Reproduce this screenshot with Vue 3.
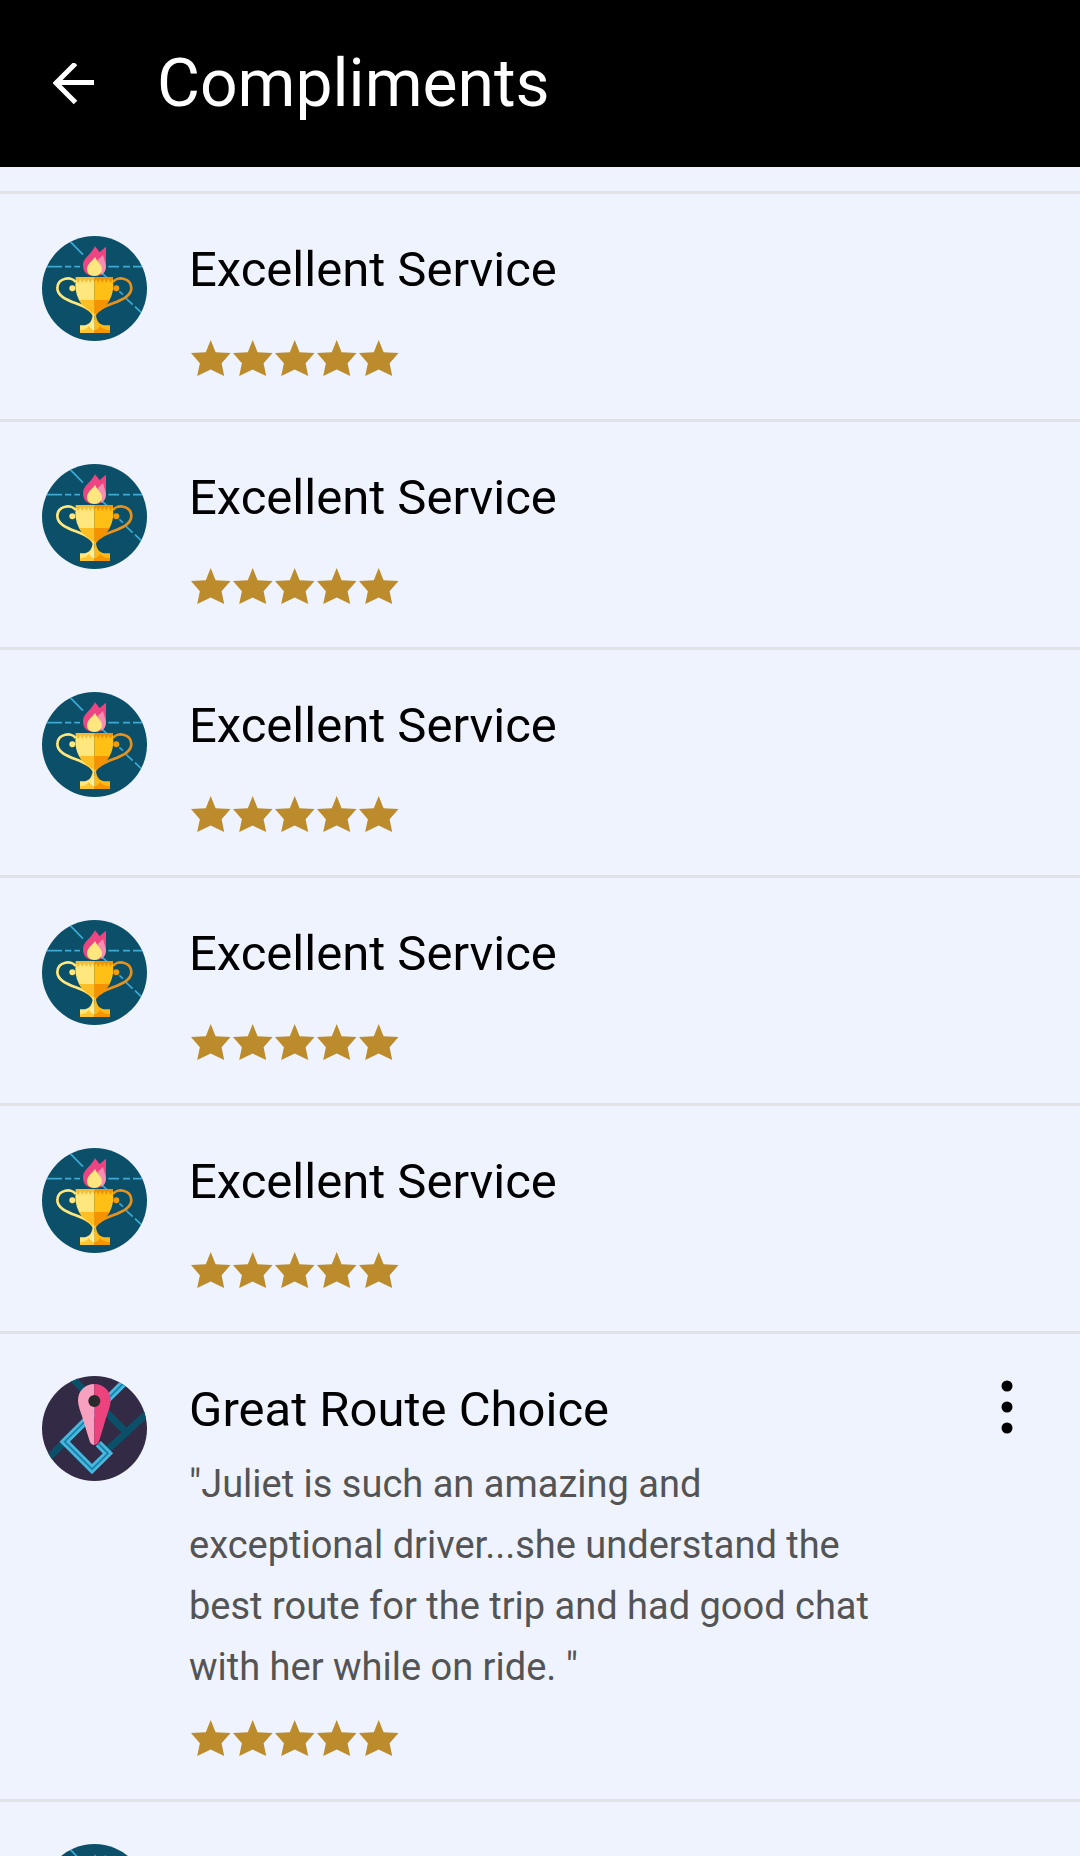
<script setup>
const service = { kind: 'trophy', title: 'Excellent Service', stars: 5 }

const compliments = [
  service,
  service,
  service,
  service,
  service,
  {
    kind: 'route',
    title: 'Great Route Choice',
    comment:
      '"Juliet is such an amazing and exceptional driver...she understand the best route for the trip and had good chat with her while on ride. "',
    stars: 5,
  },
  { kind: 'trophy' },
]
</script>

<template>
  <div class="screen">
    <header class="bar">
      <button class="back" type="button" aria-label="Back">
        <svg width="42" height="42" viewBox="0 0 42 42" fill="none" stroke="#fff" stroke-width="5">
          <path d="M41.500 20H4M23 1L3.500 20.500L23 40" transform="translate(-.5 -.5)" />
        </svg>
      </button>
      <h1 class="heading">Compliments</h1>
    </header>

    <main class="body">
      <ul class="list">
        <li v-for="(item, index) in compliments" :key="index" class="row">
          <svg v-if="item.kind === 'trophy'" class="avatar" viewBox="36 33 315 315" aria-hidden="true">
            <rect x="36" y="33" width="315" height="315" fill="#0b4f69" />
            <g stroke="#3fa9d4" stroke-width="5" fill="none">
              <path d="M118 47L159 89M268 199L279 209M288 220L308 239M315 245L334 263M212 141L231 158" />
              <path d="M48 125H96M105 125H124M133 125H150M235 125H267M279 125H300M309 125H340" />
            </g>
            <path d="M195 64L209 81L228 65V122C228 142 214 153 193 153C171 153 159 141 159 120C159 99 181 91 195 64Z" fill="#ec4581" />
            <path d="M219 90L203 105L214 150C224 144 228 135 228 122Z" fill="#f8a1bd" opacity=".8" />
            <path d="M195 95C190 107 171 115 171 133C171 146 181 153 193 153C206 153 216 145 216 133C216 117 201 112 195 95Z" fill="#ffe67f" />
            <g fill="none" stroke-width="8">
              <path d="M137 171C126 153 83 157 82 189C82 234 178 233 193 273" stroke="#ffe77e" />
              <path d="M249 171C260 153 303 157 304 189C304 234 208 233 193 273" stroke="#e6921d" />
            </g>
            <circle cx="127" cy="190" r="9" fill="#ffe77e" />
            <circle cx="259" cy="190" r="9" fill="#f19b0c" />
            <path d="M138 156H193V267C163 251 136 225 136 180Z" fill="#ffe77e" />
            <path d="M193 156H248L250 180C250 225 223 251 193 267Z" fill="#ffbf15" />
            <path d="M147 225H193V267C171 255 156 242 147 225Z" fill="#ffbf24" />
            <path d="M193 225H239C230 242 215 255 193 267Z" fill="#f49200" />
            <path d="M137 156H193V174L187 163L181 174L175 163L169 174L163 163L157 174L151 163L145 174L137 163Z" fill="#f5bd35" />
            <path d="M193 156H249V163L241 174L235 163L229 174L223 163L217 174L211 163L205 174L199 163L193 174Z" fill="#ed960b" />
            <path d="M189 265H193V324H150V301H164C180 299 187 287 189 265Z" fill="#ffe77e" />
            <path d="M193 265H197C199 287 206 299 222 301H240V324H193Z" fill="#ffb818" />
            <path d="M150 324V316C162 315 171 311 177 303C181 311 187 315 193 316V324Z" fill="#ffc532" />
            <path d="M193 324V316C200 315 206 311 210 303C218 312 228 315 240 316V324Z" fill="#f59500" />
            <path d="M179 301C185 297 189 292 193 284V316C186 313 180 308 179 301Z" fill="#fff09b" />
          </svg>

          <svg v-else class="avatar" viewBox="36 33 315 315" aria-hidden="true">
            <rect x="36" y="33" width="315" height="315" fill="#332b46" />
            <g fill="none" stroke="#0b4f69" stroke-width="21">
              <path d="M120 33L286 199M46 288L130 204M230 257L360 137" />
            </g>
            <path d="M286 49L104 230L186 312L234 265L205 236" fill="none" stroke="#48b7de" stroke-width="22" />
            <path d="M286 49L104 230L186 312L234 265L205 236" fill="none" stroke="#157fa8" stroke-width="5" />
            <path d="M193 57C165 57 144 78 144 106C144 128 157 151 164 180L179 229C182 237 187 240 193 240Z" fill="#f7a0bf" />
            <path d="M193 57C221 57 242 78 242 106C242 128 229 151 222 180L207 229C204 237 199 240 193 240Z" fill="#ec427d" />
            <circle cx="193" cy="108" r="18" fill="#282a2b" />
          </svg>

          <div class="content">
            <h2 v-if="item.title" class="title">{{ item.title }}</h2>
            <p v-if="item.comment" class="comment">{{ item.comment }}</p>
            <div v-if="item.stars" class="stars" role="img" :aria-label="`${item.stars} out of 5 stars`">
              <svg v-for="n in item.stars" :key="n" class="star" viewBox="0 0 42 42">
                <path d="M21.700 4L26.600 16.300L41.500 17L32.600 27.300L35.200 40L21.700 33.600L8.200 40L10.900 27.300L2 17L16.800 16.300Z" />
              </svg>
            </div>
          </div>

          <button v-if="item.comment" class="more" type="button" aria-label="More options">
            <svg width="12" height="54" viewBox="0 0 12 54">
              <circle cx="6" cy="6" r="5.500" />
              <circle cx="6" cy="27" r="5.500" />
              <circle cx="6" cy="48" r="5.500" />
            </svg>
          </button>
        </li>
      </ul>
    </main>
  </div>
</template>

<style>
body {
  margin: 0;
  background: #eff3fe;
}
</style>

<style scoped>
.screen {
  display: flex;
  flex-direction: column;
  height: 100vh;
  background: #eff3fe;
  color: #000;
  font-family: Roboto, "Liberation Sans", sans-serif;
}

.bar {
  display: flex;
  flex: none;
  align-items: center;
  gap: 62px;
  padding: 45px 53px 44px;
  background: #000;
  color: #fff;
}

button {
  display: flex;
  padding: 0;
  border: 0;
  background: none;
  cursor: pointer;
}

.heading {
  margin: 0;
  font-size: 66px;
  font-weight: 400;
  line-height: 78px;
}

.body {
  flex: 1;
  min-height: 0;
  overflow-y: auto;
  scrollbar-width: none;
}

.list {
  margin: 0;
  padding: 24px 0 0;
  list-style: none;
}

.row {
  display: flex;
  align-items: flex-start;
  gap: 42px;
  padding: 42px 67px 41px 42px;
  border-top: 3px solid #e1e2e5;
}

.avatar {
  flex: none;
  width: 105px;
  height: 105px;
  border-radius: 50%;
}

.content {
  display: flex;
  flex: 1;
  flex-direction: column;
  min-width: 0;
  min-height: 142px;
}

.title {
  margin: 0;
  font-size: 49px;
  font-weight: 400;
  line-height: 68px;
}

.comment {
  max-width: 700px;
  margin: 10px 0 18px;
  color: #545454;
  font-size: 38px;
  line-height: 61px;
}

.stars {
  display: flex;
  margin-top: auto;
}

.star {
  width: 42px;
  height: 42px;
  fill: #bb8b2c;
}

.more {
  margin-top: 4px;
}
</style>
